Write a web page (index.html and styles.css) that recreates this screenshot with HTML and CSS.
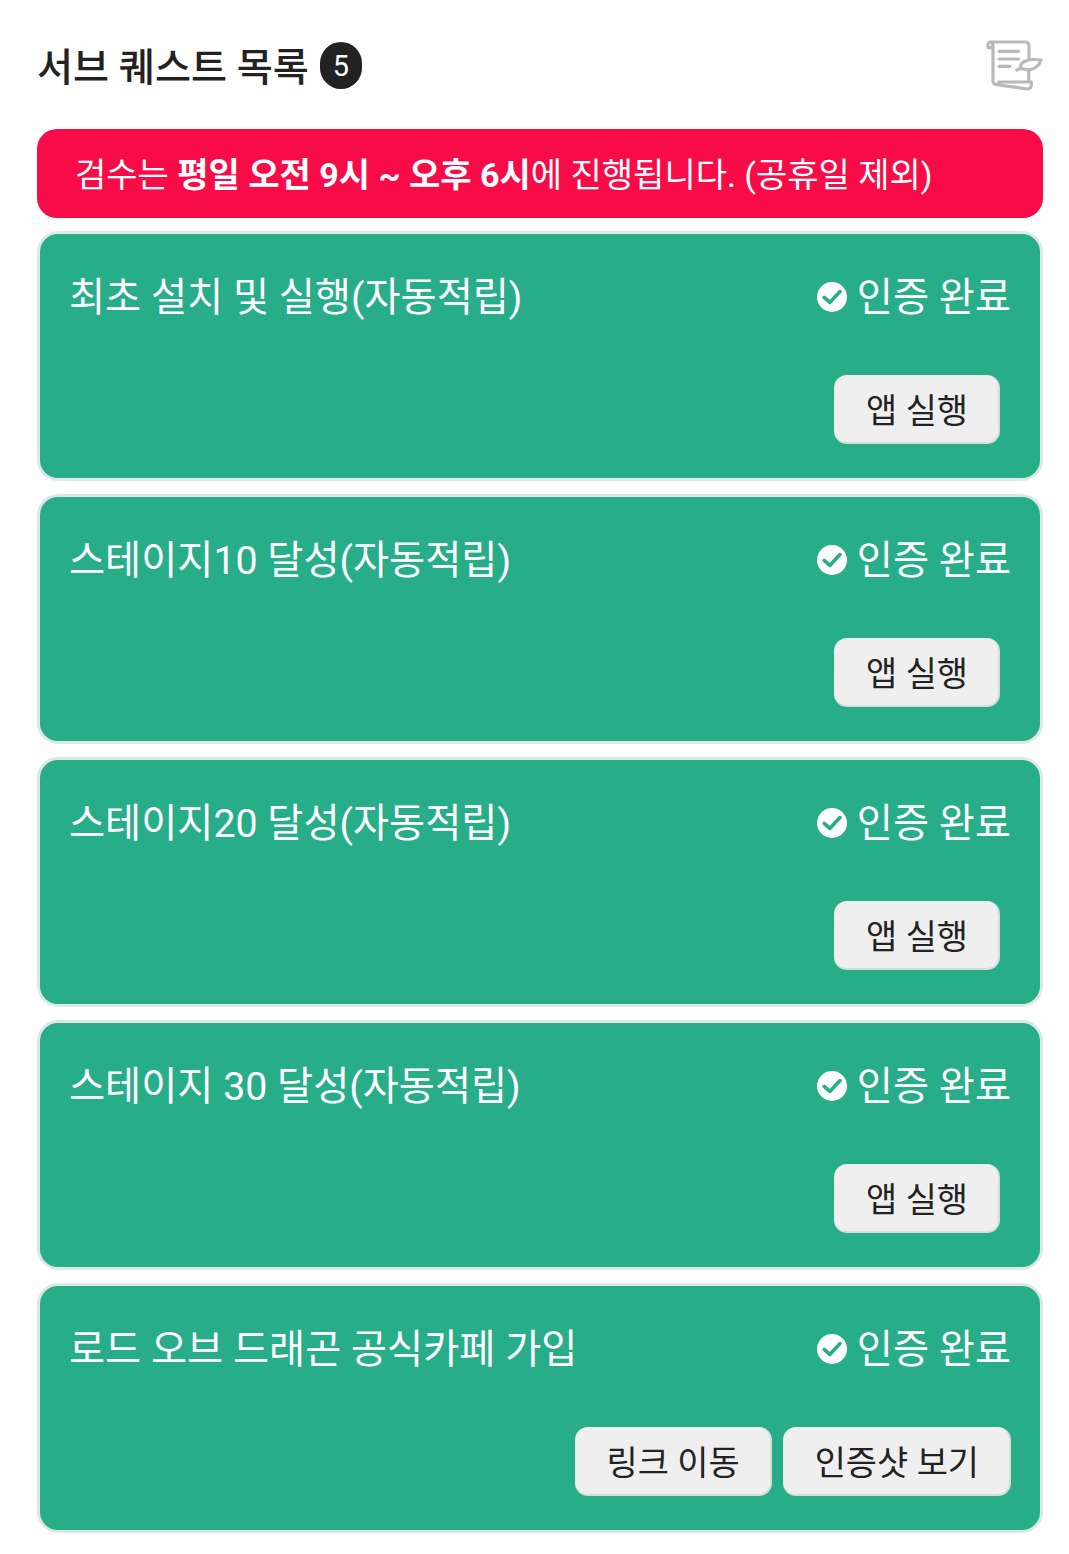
FILE: index.html
```html
<!DOCTYPE html>
<html lang="ko">
<head>
<meta charset="utf-8">
<title>서브 퀘스트 목록</title>
<link rel="stylesheet" href="styles.css">
</head>
<body>
<svg class="sprite" aria-hidden="true">
  <symbol id="check" viewBox="0 0 30 30">
    <circle cx="15" cy="15" r="15" fill="#fff"/>
    <path d="M7.2 15.4 12.8 20.4 23 9.6" fill="none" stroke="#27ae89" stroke-width="3.6" stroke-linecap="round" stroke-linejoin="round"/>
  </symbol>
</svg>
<main class="page">
  <header class="header">
    <h1 class="title">서브 퀘스트 목록</h1>
    <span class="count">5</span>
    <svg class="scroll" viewBox="80 57 170 156" fill="none" stroke="#b9b9b9" stroke-width="9.5" stroke-linecap="round" stroke-linejoin="round">
      <path d="M99 80H86V72Q86 63 95 63H199Q209 64 209 76V113M94 64Q101 67 101 76V182Q102 190 112 191L204 204Q215 203 216 194V183H118V188M208 153V181"/>
      <path d="M119 91H178M119 114H178M119 136H152"/>
      <path d="M172 147 184 142C180 119 210 112 245 117C238 138 216 155 184 142"/>
    </svg>
  </header>
  <p class="notice">검수는 <b>평일 오전 9시 ~ 오후 6시</b>에 진행됩니다. (공휴일 제외)</p>
  <ul class="quests">
    <li class="quest">
      <div class="row"><span>최초 설치 및 실행(자동적립)</span><span class="status"><svg class="check"><use href="#check"/></svg>인증 완료</span></div>
      <div class="actions single"><button class="btn">앱 실행</button></div>
    </li>
    <li class="quest">
      <div class="row"><span>스테이지10 달성(자동적립)</span><span class="status"><svg class="check"><use href="#check"/></svg>인증 완료</span></div>
      <div class="actions single"><button class="btn">앱 실행</button></div>
    </li>
    <li class="quest">
      <div class="row"><span>스테이지20 달성(자동적립)</span><span class="status"><svg class="check"><use href="#check"/></svg>인증 완료</span></div>
      <div class="actions single"><button class="btn">앱 실행</button></div>
    </li>
    <li class="quest">
      <div class="row"><span>스테이지 30 달성(자동적립)</span><span class="status"><svg class="check"><use href="#check"/></svg>인증 완료</span></div>
      <div class="actions single"><button class="btn">앱 실행</button></div>
    </li>
    <li class="quest">
      <div class="row"><span>로드 오브 드래곤 공식카페 가입</span><span class="status"><svg class="check"><use href="#check"/></svg>인증 완료</span></div>
      <div class="actions"><button class="btn">링크 이동</button><button class="btn">인증샷 보기</button></div>
    </li>
  </ul>
</main>
</body>
</html>
```
FILE: styles.css
```css
* { box-sizing: border-box; }
body {
  margin: 0;
  background: #fefefe;
  color: #222;
  font-family: Roboto, "Noto Sans CJK KR", sans-serif;
  font-size: 39.25px;
}
.sprite { display: none; }
.page { padding: 37px 26px 21px 37px; }
.header { display: flex; align-items: center; height: 57px; margin-bottom: 35px; }
.title { margin: 0; padding-top: 6px; font-size: 39.2px; font-weight: 500; line-height: 57px; white-space: nowrap; }
.count {
  width: 42px;
  height: 47px;
  margin-left: 11px;
  border-radius: 21px;
  background: #222;
  color: #fff;
  font-size: 28.875px;
  line-height: 48px;
  text-align: center;
}
.scroll { width: 56.7px; height: 52px; margin-left: auto; }
.notice {
  height: 89px;
  margin: 0 0 13px;
  padding: 2px 37px 0 38px;
  border-radius: 20px;
  background: #f70c48;
  color: #fff;
  font-size: 34px;
  line-height: 89px;
  white-space: nowrap;
}
.quests { display: grid; gap: 13px; margin: 0; padding: 0; list-style: none; }
.quest {
  display: flex;
  flex-direction: column;
  justify-content: space-between;
  height: 250px;
  padding: 34px 29px;
  border: 3px solid #dce8e5;
  border-radius: 21px;
  background: #27ae89;
  color: #fff;
}
.row { display: flex; justify-content: space-between; height: 57px; line-height: 61px; white-space: nowrap; }
.status { display: flex; align-items: flex-start; gap: 10px; }
.check { width: 30px; height: 30px; margin-top: 14px; }
.actions { display: flex; justify-content: flex-end; gap: 11px; }
.single { padding-right: 11px; }
.btn {
  height: 69px;
  padding: 6px 30px 0 32px;
  border: solid #d5dedb;
  border-width: 0 2px 2px 0;
  border-radius: 13px;
  background: #efefef;
  color: #222;
  font-family: inherit;
  font-size: 33.9px;
  line-height: 61px;
}
```
